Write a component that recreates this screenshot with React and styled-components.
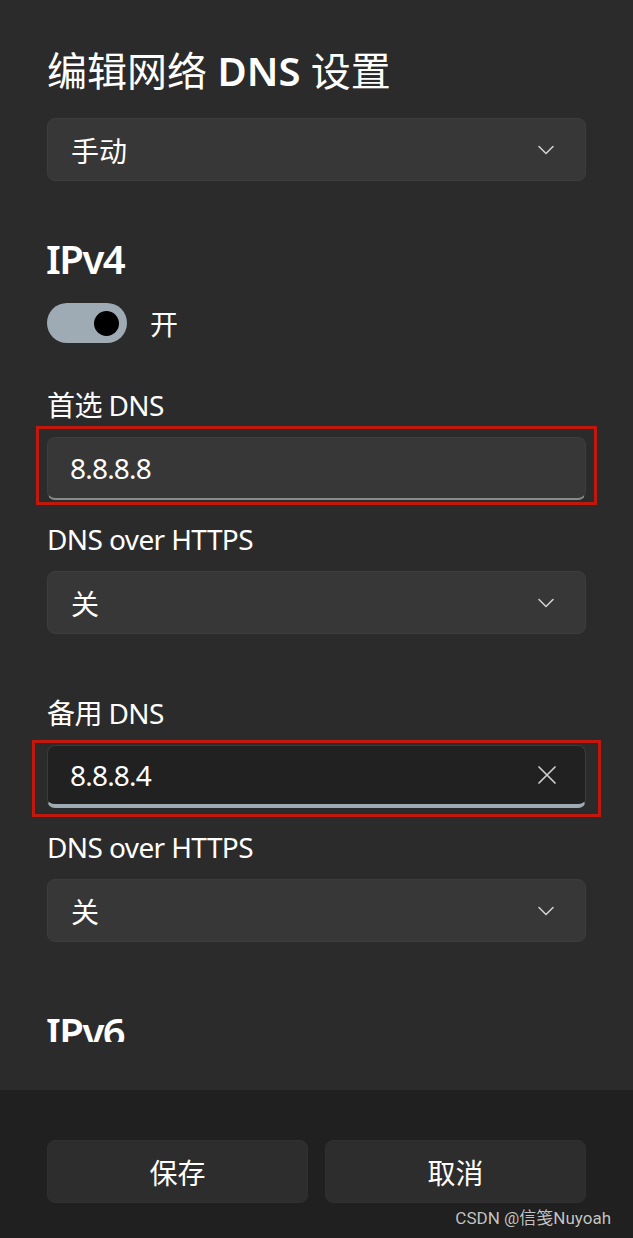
import React from 'react'
import styled, { createGlobalStyle } from 'styled-components'

const GlobalStyle = createGlobalStyle`
    html, body {
        margin: 0;
        padding: 0;
        background: #2b2b2b;
    }
    body {
        font-family: "Noto Sans", "Noto Sans CJK SC", sans-serif;
        color: #ffffff;
    }
    * {
        box-sizing: border-box;
    }
`

function Chevron() {
    return (
        <svg width="18" height="12" viewBox="0 0 18 12" fill="none">
            <path d="M2 2.5 L9 9.5 L16 2.5" stroke="#d0d0d0" strokeWidth="1.6" strokeLinecap="round" strokeLinejoin="round" />
        </svg>
    )
}

function Cross() {
    return (
        <svg width="20" height="20" viewBox="0 0 20 20" fill="none">
            <path d="M2 2 L18 18 M18 2 L2 18" stroke="#cfcfcf" strokeWidth="1.7" strokeLinecap="round" />
        </svg>
    )
}

function App() {
    return (
        <Page>
            <GlobalStyle />
            <Body>
                <Scroll>
                    <Title>编辑网络 <Latin>DNS</Latin> 设置</Title>
                    <Select $top={21}>
                        <span>手动</span>
                        <Chevron />
                    </Select>

                    <Heading $top={52}>IPv4</Heading>
                    <ToggleRow>
                        <Toggle><Knob /></Toggle>
                        <ToggleLabel>开</ToggleLabel>
                    </ToggleRow>

                    <Label $top={42}>首选 DNS</Label>
                    <Marked $l={11} $r={11} $t={11} $b={5}>
                        <Input>8.8.8.8</Input>
                    </Marked>
                    <Label $top={19}>DNS over HTTPS</Label>
                    <Select>
                        <span>关</span>
                        <Chevron />
                    </Select>

                    <Label $top={59}>备用 DNS</Label>
                    <Marked $l={15} $r={15} $t={5} $b={9}>
                        <Input $focused>
                            <span>8.8.8.4</span>
                            <Cross />
                        </Input>
                    </Marked>
                    <Label $top={19}>DNS over HTTPS</Label>
                    <Select>
                        <span>关</span>
                        <Chevron />
                    </Select>

                    <Heading $top={64}>IPv6</Heading>
                </Scroll>
            </Body>
            <Footer>
                <Button>保存</Button>
                <Button>取消</Button>
                <Watermark>CSDN @信笺Nuyoah</Watermark>
            </Footer>
        </Page>
    )
}

export default App

const Page = styled.div`
    width: 633px;
    height: 1238px;
    display: flex;
    flex-direction: column;
    overflow: hidden;
`

const Body = styled.main`
    height: 1090px;
    flex: none;
    padding-bottom: 48px;
    background: #2b2b2b;
`

const Scroll = styled.div`
    height: 100%;
    overflow: hidden;
    padding: 45px 47px 0 47px;
    display: flex;
    flex-direction: column;
`

const Title = styled.h1`
    margin: 0;
    font-size: 40px;
    line-height: 52px;
    font-weight: 400;
`

const Latin = styled.span`
    font-weight: 600;
`

const Heading = styled.h2`
    margin: ${p => p.$top}px 0 0 -1px;
    font-size: 40px;
    line-height: 52px;
    font-weight: 600;
    letter-spacing: -1.5px;
    flex: none;
`

const Select = styled.div`
    margin-top: ${p => p.$top || 0}px;
    height: 63px;
    flex: none;
    display: flex;
    align-items: center;
    justify-content: space-between;
    padding: 0 30px 0 23px;
    background: #373737;
    border: 1px solid #3d3d3d;
    border-radius: 8px;
    font-size: 28px;
`

const ToggleRow = styled.div`
    margin-top: 18px;
    display: flex;
    align-items: center;
    gap: 23px;
    height: 40px;
    flex: none;
`

const Toggle = styled.div`
    width: 80px;
    height: 40px;
    border-radius: 20px;
    background: #9fabb4;
    display: flex;
    align-items: center;
    justify-content: flex-end;
    padding-right: 8px;
`

const Knob = styled.div`
    width: 25px;
    height: 25px;
    border-radius: 50%;
    background: #000000;
`

const ToggleLabel = styled.span`
    font-size: 28px;
`

const Label = styled.div`
    margin: ${p => p.$top}px 0 12px 0;
    font-size: 28px;
    line-height: 40px;
    letter-spacing: -0.6px;
    flex: none;
`

const Marked = styled.div`
    position: relative;
    flex: none;

    &::after {
        content: "";
        position: absolute;
        left: -${p => p.$l}px;
        right: -${p => p.$r}px;
        top: -${p => p.$t}px;
        bottom: -${p => p.$b}px;
        border: 3px solid #c0180c;
        pointer-events: none;
    }
`

const Input = styled.div`
    height: 63px;
    display: flex;
    align-items: center;
    justify-content: space-between;
    padding: 0 28px 0 22px;
    background: ${p => (p.$focused ? '#212121' : '#373737')};
    border: 1px solid ${p => (p.$focused ? '#3b3b3b' : '#3d3d3d')};
    border-bottom: ${p => (p.$focused ? '4px solid #9fabb4' : '2px solid #8b8b8b')};
    border-radius: 8px;
    font-size: 28px;
    letter-spacing: -0.8px;
`

const Footer = styled.footer`
    position: relative;
    flex: 1;
    background: #202020;
    padding: 50px 47px 0 47px;
    display: grid;
    grid-template-columns: 1fr 1fr;
    column-gap: 17px;
    align-content: start;
`

const Button = styled.button`
    height: 63px;
    background: #2d2d2d;
    border: 1px solid #303030;
    border-radius: 8px;
    color: #ffffff;
    font-family: "Noto Sans", "Noto Sans CJK SC", sans-serif;
    font-size: 28px;
    padding: 0;
`

const Watermark = styled.span`
    position: absolute;
    right: 22px;
    bottom: 9px;
    font-family: Roboto, "Noto Sans CJK SC", sans-serif;
    font-size: 17px;
    color: #c4c4c4;
    text-shadow: 0 0 1px rgba(0, 0, 0, 0.6);
`
